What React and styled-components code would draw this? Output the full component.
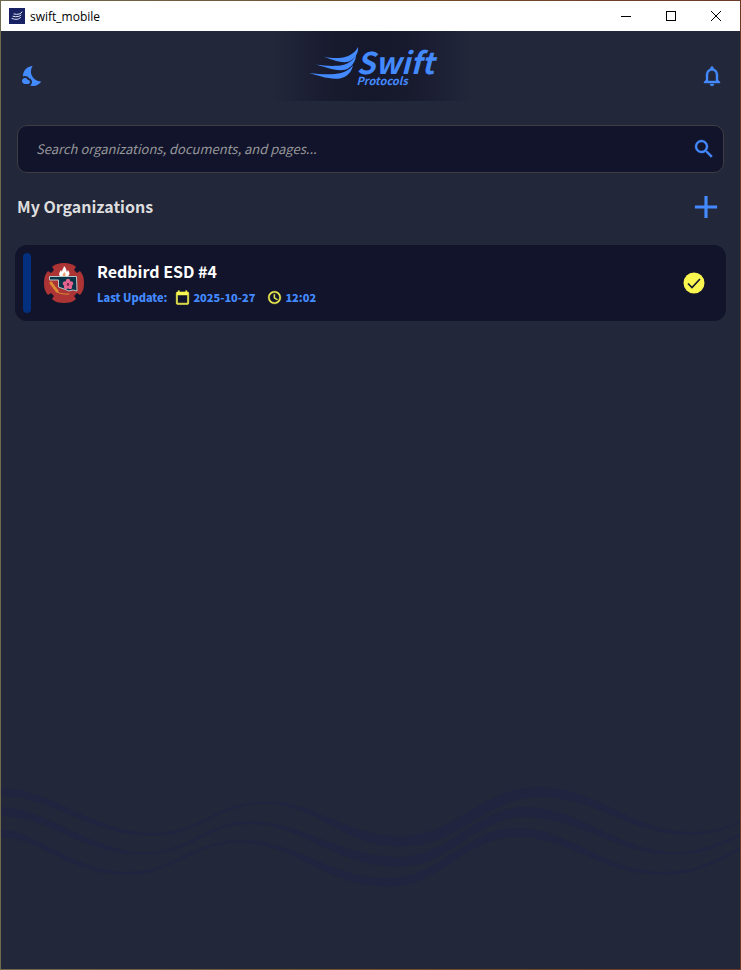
import React, { useState } from 'react';
import styled, { createGlobalStyle } from 'styled-components';
import {
  MdNightsStay,
  MdNotificationsNone,
  MdSearch,
  MdAdd,
  MdCalendarToday,
  MdAccessTime,
} from 'react-icons/md';

const GlobalStyle = createGlobalStyle`
  * {
    box-sizing: border-box;
  }
  body {
    margin: 0;
    background: #22273a;
    font-family: 'Noto Sans CJK JP', 'Noto Sans', sans-serif;
  }
  button {
    background: none;
    border: none;
    padding: 0;
    cursor: pointer;
  }
  svg {
    display: block;
    flex-shrink: 0;
  }
`;

// Window frame
const Frame = styled.div`
  min-height: 100vh;
  padding: 1px;
  display: flex;
  flex-direction: column;
  background: linear-gradient(to right, #6d6a50, #74502f 50%, #6b3a26);
`;

const TitleBar = styled.div`
  height: 30px;
  display: flex;
  align-items: center;
  padding: 0 2px 0 8px;
  background: #ffffff;
  color: #000000;
  font: 12px 'Open Sans', 'Noto Sans', sans-serif;
`;

const WindowTitle = styled.span`
  flex: 1;
  margin-left: 5px;
`;

const WindowButton = styled.button`
  width: 45px;
  height: 30px;
  display: flex;
  align-items: center;
  justify-content: center;
`;

const Screen = styled.div`
  flex: 1;
  position: relative;
  background: #22273a;
`;

const Waves = styled.svg`
  position: absolute;
  left: 0;
  bottom: 70px;
  width: 100%;
  height: 120px;
  fill: #21243e;
`;

const Header = styled.header`
  height: 70px;
  display: flex;
  align-items: center;
  justify-content: space-between;
  padding: 0 10px 0 14px;
`;

const IconButton = styled.button`
  width: ${({ $tall }) => ($tall ? '36px' : '28px')};
  height: ${({ $tall }) => ($tall ? '70px' : '36px')};
  padding-top: ${({ $tall }) => ($tall ? '20px' : '0')};
  display: flex;
  align-items: center;
  justify-content: center;
  color: #448aff;

  path:not([fill='none']) {
    stroke-width: ${({ $bold }) => ($bold ? 0.4 : 0)};
  }
`;

const Logo = styled.a`
  width: 200px;
  height: 70px;
  display: flex;
  align-items: flex-start;
  padding: 15px 0 0 36px;
  color: #448aff;
  text-decoration: none;
  background: linear-gradient(to right, transparent, #181a2e 30%, #15172b 48%, #181a2e 68%, transparent);
`;

const LogoText = styled.span`
  display: flex;
  flex-direction: column;
  font-style: italic;
  font-weight: 700;
`;

const LogoName = styled.span`
  font-size: 30px;
  line-height: 30px;
`;

const LogoSub = styled.span`
  font-size: 11px;
  line-height: 8px;
`;

const Content = styled.main`
  position: relative;
  padding: 24px 14px 0;
`;

const SearchBox = styled.form`
  height: 48px;
  margin: 0 2px;
  padding: 0 5px 0 18px;
  display: flex;
  align-items: center;
  background: #11142a;
  border: 1px solid #3d3d43;
  border-radius: 10px;
`;

const SearchInput = styled.input`
  flex: 1;
  min-width: 0;
  padding: 0 0 2px;
  border: none;
  outline: none;
  background: none;
  color: #dddddd;
  font: italic 13px 'Noto Sans CJK JP', 'Noto Sans', sans-serif;

  &::placeholder {
    color: #97979b;
    opacity: 1;
  }
`;

const SectionHeader = styled.div`
  display: flex;
  align-items: center;
  justify-content: space-between;
  height: 72px;
  padding: 0 6px 4px 2px;
`;

const SectionTitle = styled.h2`
  margin: 0;
  padding-bottom: 2px;
  font-size: 16px;
  line-height: 24px;
  font-weight: 700;
  color: #dddddd;
`;

const Card = styled.article`
  display: flex;
  align-items: center;
  height: 76px;
  padding: 8px 21px 8px 8px;
  background: #11142a;
  border-radius: 12px;
`;

const Accent = styled.div`
  align-self: stretch;
  width: 8px;
  margin-right: 13px;
  border-radius: 4px;
  background: #03307e;
`;

const CardBody = styled.div`
  flex: 1;
  margin-left: 13px;
  padding-top: 2px;
`;

const CardTitle = styled.h3`
  margin: 0;
  font-size: 16px;
  line-height: 26px;
  font-weight: 700;
  color: #ffffff;
`;

const Meta = styled.div`
  display: flex;
  align-items: center;
  height: 26px;
  font-size: 11px;
  font-weight: 900;
  color: #448aff;

  svg {
    margin-right: 3px;
    color: #f9f650;
  }
  path:not([fill='none']) {
    stroke-width: 0.8;
  }
`;

const MetaItem = styled.span`
  display: flex;
  align-items: center;
  margin-right: ${({ $gap }) => $gap || 0}px;
`;

const Wing = () => (
  <svg width="48" height="36" viewBox="0 0 48 36" fill="currentColor" overflow="visible" aria-hidden="true">
    <path d="M14 10.500C22 12 30 13 36 11C43 9 47 5 49 1C50 6 46 13 40 15.500C32 18 22 13 14 10.500Z" />
    <path d="M6 18.500C16 20 27 20.500 34 19C41 17 45 13 47 9C47 15 43 21 37 23.500C28 26.500 14 20 6 18.500Z" />
    <path d="M0 27C12 28.500 24 29 32 27C38 25.500 42 22 44 19C43 26 38 31 31 32.500C20 34 8 29 0 27Z" />
  </svg>
);

const AppIcon = () => (
  <svg width="16" height="16" viewBox="0 0 16 16" aria-hidden="true">
    <rect width="16" height="16" fill="#172163" />
    <g fill="none" stroke="#dfe7f5" strokeLinecap="round">
      <path d="M5 6C9 7 12 6 13 4" />
      <path d="M4 8.300C8 9.300 11 8.500 12 7" />
      <path d="M3 10.500C7 12 10 11.500 11.500 9.500" />
    </g>
  </svg>
);

const SelectedIcon = () => (
  <svg width="22" height="22" viewBox="0 0 22 22" role="img" aria-label="Selected">
    <circle cx="11" cy="11" r="10.500" fill="#f9f650" />
    <path d="M5 11.500L9 15.500L17 7" fill="none" stroke="#11142a" strokeWidth="1.600" />
  </svg>
);

const Badge = () => (
  <svg width="40" height="40" viewBox="0 0 40 40" role="img" aria-label="Redbird ESD">
    <path
      fill="#ac3435"
      d="M20 0C25 0 29 1 32 4L30 7L33 10L36 8C39 11 40 15 40 20C40 25 39 29 36 32L33 30L30 33L32 36C29 39 25 40 20 40C15 40 11 39 8 36L10 33L7 30L4 32C1 29 0 25 0 20C0 15 1 11 4 8L7 10L10 7L8 4C11 1 15 0 20 0Z"
    />
    <path
      fill="#ffffff"
      d="M16 13C14 11 16 9 17 7L18 9C18 6 20 5 20 3C23 6 22 7 23 9L24 7C26 10 26 12 24 13Z"
    />
    <path fill="#ef9c68" d="M19 13C18 11 20 11 20 9C22 11 22 12 21 13Z" />
    <path
      fill="#093448"
      stroke="#b9c6c8"
      d="M5.500 13.500H32.500L33 28L29 27L25 28L20 26L14.500 24V17H5.500Z"
    />
    <g fill="#e76592">
      <circle cx="24" cy="18" r="2.200" />
      <circle cx="27" cy="20.500" r="2.200" />
      <circle cx="26" cy="24" r="2.200" />
      <circle cx="22" cy="24" r="2.200" />
      <circle cx="21" cy="20.500" r="2.200" />
    </g>
    <circle cx="24" cy="21.500" r="1.200" fill="#8c294c" />
    <g fill="none" stroke="#dc8b35" strokeLinecap="round">
      <path strokeWidth="3" strokeDasharray="1 2" d="M7 20L13 28" />
      <path d="M7 19C9 28 15 32 25 31" />
    </g>
  </svg>
);

const App = () => {
  const [query, setQuery] = useState('');

  return (
    <Frame>
      <GlobalStyle />
      <TitleBar>
        <AppIcon />
        <WindowTitle>swift_mobile</WindowTitle>
        <WindowButton aria-label="Minimize">
          <svg width="10" height="10" stroke="#000000" fill="none">
            <path d="M0 5.500H10" />
          </svg>
        </WindowButton>
        <WindowButton aria-label="Maximize">
          <svg width="10" height="10" stroke="#000000" fill="none">
            <rect x="0.500" y="0.500" width="9" height="9" />
          </svg>
        </WindowButton>
        <WindowButton aria-label="Close">
          <svg width="10" height="10" stroke="#000000" fill="none">
            <path d="M0 0L10 10M10 0L0 10" />
          </svg>
        </WindowButton>
      </TitleBar>

      <Screen>
        <Waves viewBox="0 0 740 120" preserveAspectRatio="none" aria-hidden="true">
          <path d="M0 9C50 9 95 54 150 54C200 54 215 22 265 22C315 22 345 57 400 57C455 57 480 8 540 8C595 8 635 53 690 53C715 53 730 46 740 42V44C725 51 710 56 690 56C630 56 595 18 540 18C485 18 460 68 400 68C345 68 315 25 265 25C215 25 200 57 150 57C90 57 50 17 0 17Z" />
          <path d="M0 28C45 28 90 73 143 73C190 73 205 42 250 42C300 42 340 78 398 78C450 78 475 28 525 28C580 28 620 73 675 73C705 73 725 60 740 55V58C725 64 705 76 675 76C615 76 580 38 525 38C475 38 450 88 398 88C335 88 300 45 250 45C205 45 190 76 143 76C85 76 45 37 0 37Z" />
          <path d="M0 50C40 54 75 93 125 93C175 93 190 61 240 61C295 61 330 99 388 99C440 99 465 49 517 49C570 49 605 93 663 93C700 93 725 75 740 69V72C725 78 700 96 663 96C600 96 570 58 517 58C465 58 440 108 388 108C325 108 295 64 240 64C190 64 175 96 125 96C70 96 40 60 0 58Z" />
        </Waves>

        <Header>
          <IconButton $tall aria-label="Toggle dark mode">
            <MdNightsStay size={24} />
          </IconButton>
          <Logo href="#" aria-label="Swift Protocols">
            <Wing />
            <LogoText>
              <LogoName>Swift</LogoName>
              <LogoSub>Protocols</LogoSub>
            </LogoText>
          </Logo>
          <IconButton $tall $bold aria-label="Notifications">
            <MdNotificationsNone size={24} />
          </IconButton>
        </Header>

        <Content>
          <SearchBox role="search" onSubmit={(e) => e.preventDefault()}>
            <SearchInput
              aria-label="Search"
              placeholder="Search organizations, documents, and pages..."
              value={query}
              onChange={(e) => setQuery(e.target.value)}
            />
            <IconButton $bold type="submit" aria-label="Search">
              <MdSearch size={24} />
            </IconButton>
          </SearchBox>

          <SectionHeader>
            <SectionTitle>My Organizations</SectionTitle>
            <IconButton aria-label="Add organization">
              <MdAdd size={38} />
            </IconButton>
          </SectionHeader>

          <Card>
            <Accent />
            <Badge />
            <CardBody>
              <CardTitle>Redbird ESD #4</CardTitle>
              <Meta>
                <MetaItem $gap={8}>Last Update:</MetaItem>
                <MetaItem $gap={12}>
                  <MdCalendarToday size={15} />
                  2025-10-27
                </MetaItem>
                <MetaItem>
                  <MdAccessTime size={15} />
                  12:02
                </MetaItem>
              </Meta>
            </CardBody>
            <SelectedIcon />
          </Card>
        </Content>
      </Screen>
    </Frame>
  );
};

export default App;
